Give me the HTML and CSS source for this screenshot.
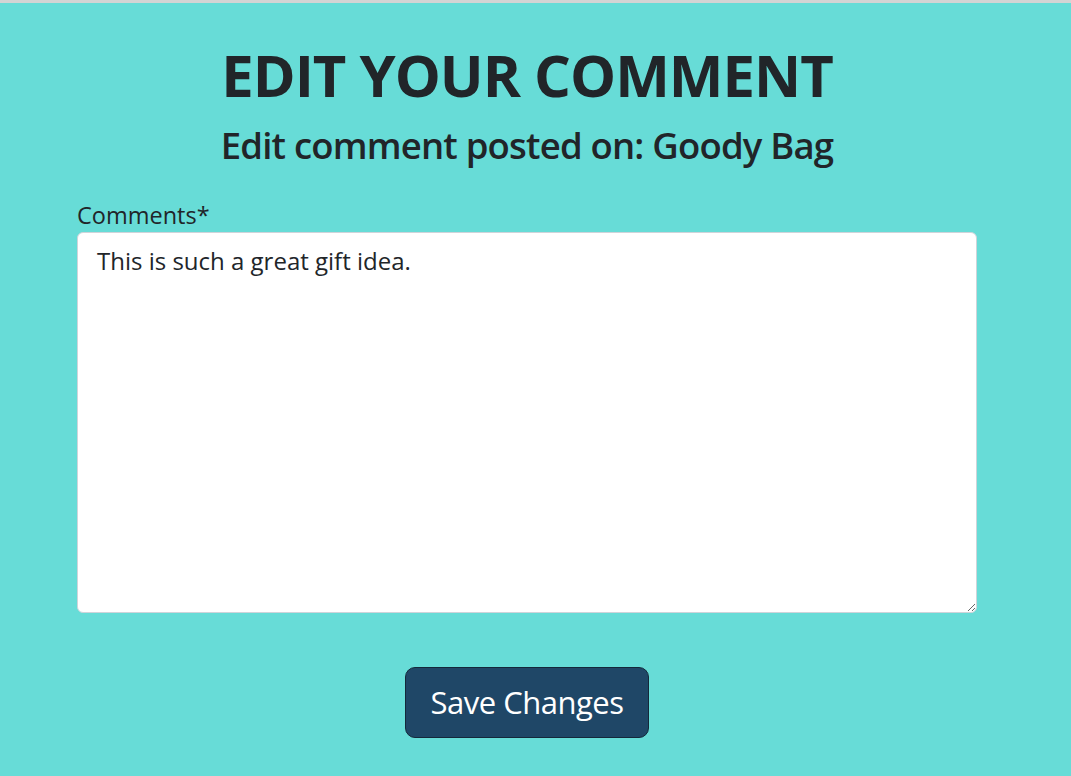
FILE: index.html
```html
<!DOCTYPE html>
<html lang="en">
<head>
<meta charset="utf-8">
<title>Edit Your Comment</title>
<link rel="stylesheet" href="styles.css">
</head>
<body>
<main class="page">
  <div class="wrap">
    <h1 class="title">EDIT YOUR COMMENT</h1>
    <h2 class="subtitle">Edit comment posted on: Goody Bag</h2>
    <form class="form">
      <label class="label" for="comment">Comments*</label>
      <textarea id="comment" class="textarea">This is such a great gift idea.</textarea>
      <div class="actions">
        <button type="button" class="btn">Save Changes</button>
      </div>
    </form>
  </div>
</main>
</body>
</html>
```
FILE: styles.css
```css
html, body {
  margin: 0;
  padding: 0;
}
body {
  background: #67dcd7;
  border-top: 3px solid #d4d4d4;
  font-family: "Open Sans", "Noto Sans", sans-serif;
  color: #212529;
  min-height: 773px;
}
.page {
  padding-right: 17px;
}
.wrap {
  width: 900px;
  margin: 0 auto;
  display: flex;
  flex-direction: column;
}
.title {
  margin: 37px 0 0;
  font-size: 58px;
  font-weight: 700;
  line-height: 1.2;
  text-align: center;
  letter-spacing: -1px;
}
.subtitle {
  margin: 14px 0 0;
  font-size: 36.5px;
  font-weight: 600;
  line-height: 1.2;
  text-align: center;
  letter-spacing: -0.8px;
}
.form {
  display: flex;
  flex-direction: column;
  margin-top: 34px;
}
.label {
  font-size: 23.5px;
  line-height: 1.2;
  margin-bottom: 2px;
}
.textarea {
  box-sizing: border-box;
  width: 900px;
  height: 381px;
  border: 1px solid #cfd4da;
  border-radius: 6px;
  background: #fff;
  padding: 12px 19px;
  font-family: "Open Sans", "Noto Sans", sans-serif;
  font-size: 24px;
  line-height: 1.3;
  color: #212529;
  resize: vertical;
}
.actions {
  display: flex;
  justify-content: center;
  margin-top: 54px;
}
.btn {
  box-sizing: border-box;
  width: 244px;
  height: 71px;
  background: #1f4767;
  color: #fff;
  border: 1px solid #14283a;
  border-radius: 10px;
  font-family: "Open Sans", "Noto Sans", sans-serif;
  font-size: 31px;
  letter-spacing: -0.5px;
}
```
